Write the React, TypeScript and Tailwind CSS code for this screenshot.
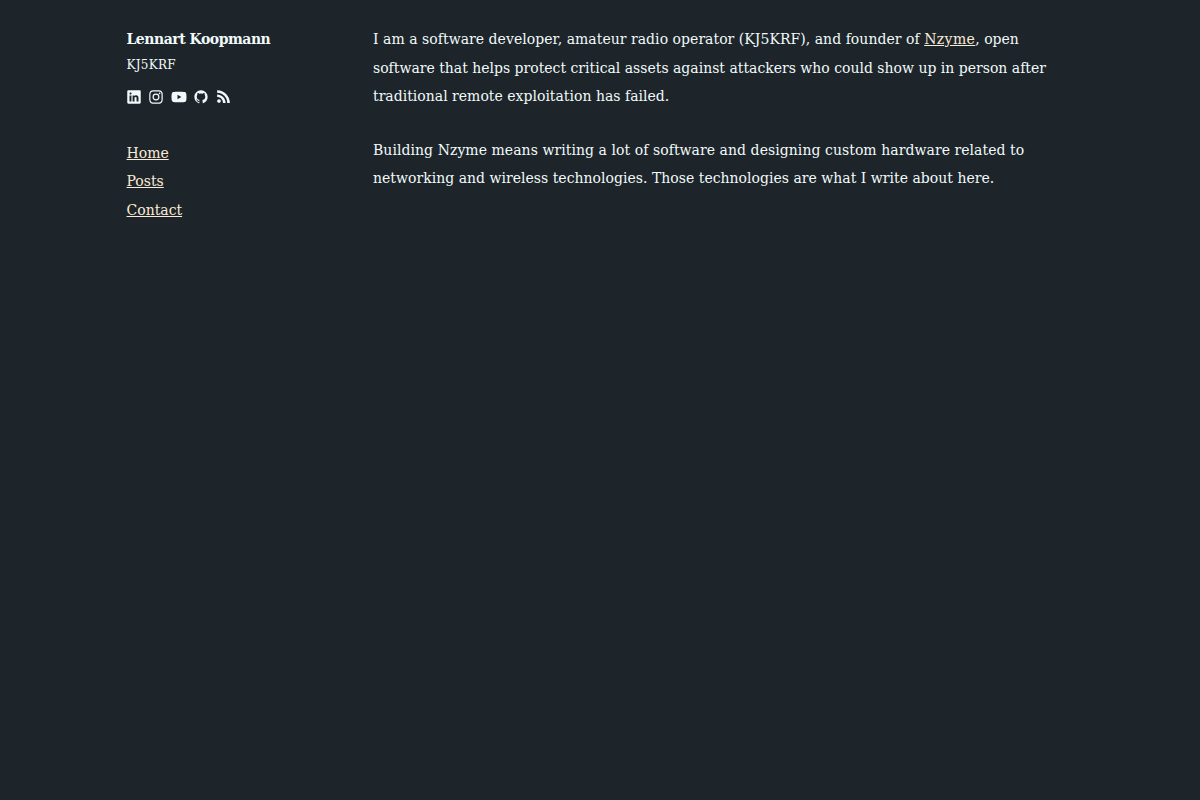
import { BiLogoInstagram, BiLogoYoutube, BiLogoGithub } from "react-icons/bi";
import { IoLogoLinkedin, IoLogoRss } from "react-icons/io";

const links = [
    { label: "Home", href: "/" },
    { label: "Posts", href: "/posts" },
    { label: "Contact", href: "/contact" },
];

function Social() {
    return (
        <div className="mt-3 flex h-[18px] items-center gap-[4.5px] -ml-[2px]">
            <a href="#"><IoLogoLinkedin className="size-[18px]" /></a>
            <a href="#"><BiLogoInstagram className="size-[18px]" /></a>
            <a href="#"><BiLogoYoutube className="size-[18px]" /></a>
            <a href="#" className="flex size-[18px] items-center justify-center"><BiLogoGithub className="size-[16px]" /></a>
            <a href="#"><IoLogoRss className="size-[17px]" /></a>
        </div>
    )
}

function Sidebar() {
    return (
        <aside className="w-[246.5px] shrink-0">
            <div className="text-[14px] leading-[28.5px] font-bold tracking-[-0.48px]">Lennart Koopmann</div>
            <div className="text-[12px] leading-[22px] tracking-[0.25px]">KJ5KRF</div>
            <Social />
            <nav className="mt-[33px] flex flex-col items-start">
                {links.map((link) => (
                    <a key={link.label} href={link.href} className="leading-[28.5px] text-[#faebd7] underline underline-offset-1">{link.label}</a>
                ))}
            </nav>
        </aside>
    )
}

export default function App() {
    return (
        <div className="min-h-screen bg-[#1e252a] pt-[25px] pl-[126.5px] font-['DejaVu_Serif',serif] text-[14px] text-[#f0fafa] flex">
            <Sidebar />
            <main className="whitespace-nowrap leading-[28.5px]">
                <p>
                    <span className="tracking-[0.037px]">I am a software developer, amateur radio operator (KJ5KRF), and founder of </span>
                    <a href="#" className="tracking-[0.4px] text-[#faebd7] underline underline-offset-1">Nzyme</a>, open<br />
                    software that helps protect critical assets against attackers who could show up in person after<br />
                    <span className="tracking-[0.015px]">traditional remote exploitation has failed.</span>
                </p>
                <p className="mt-[25px]">
                    <span className="tracking-[0.057px]">Building Nzyme means writing a lot of software and designing custom hardware related to</span><br />
                    <span className="tracking-[0.02px]">networking and wireless technologies. Those technologies are what I write about here.</span>
                </p>
            </main>
        </div>
    )
}
